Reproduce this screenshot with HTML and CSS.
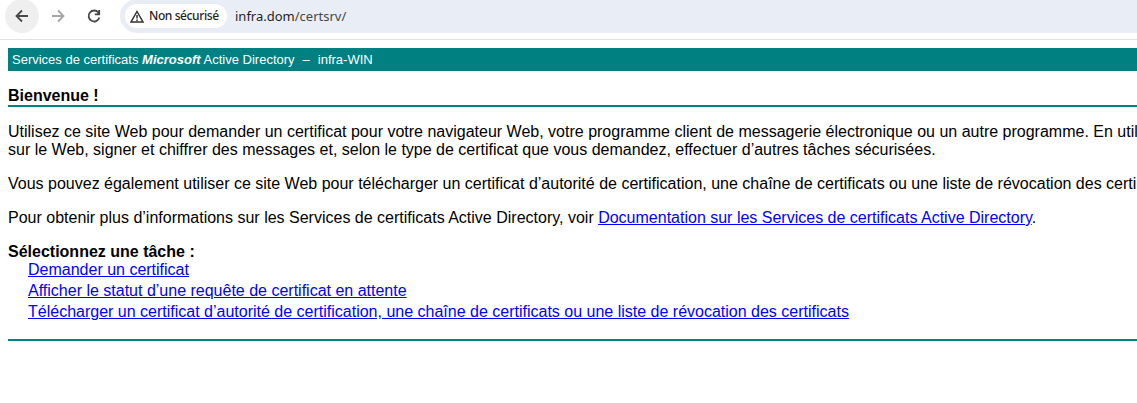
FILE: index.html
```html
<!DOCTYPE html>
<html lang="fr">
<head>
<meta charset="utf-8">
<title>Services de certificats Microsoft Active Directory</title>
<link rel="stylesheet" href="styles.css">
</head>
<body>
<header class="toolbar">
  <button class="nav-button back" aria-label="Retour">
    <svg width="16" height="16" viewBox="0 0 16 16"><path d="M14 8H3M8 2.5L2.5 8L8 13.5"/></svg>
  </button>
  <button class="nav-button forward" aria-label="Avancer">
    <svg width="16" height="16" viewBox="0 0 16 16"><path d="M2 8H13M8 2.5L13.5 8L8 13.5"/></svg>
  </button>
  <button class="nav-button reload" aria-label="Actualiser">
    <svg width="16" height="16" viewBox="0 0 16 16"><path d="M12.4 4.5A5.5 5.5 0 1 0 13.4 9.6M13.2 2V6.3H8.8"/><path class="solid" d="M13.6 3.2V6.8H10Z"/></svg>
  </button>
  <div class="omnibox">
    <span class="security">
      <svg width="14" height="13" viewBox="0 0 14 13"><path d="M7 1.5L13 12H1Z"/><path d="M7 5V8.5M7 9.5V11"/></svg>
      <span class="security-label">Non sécurisé</span>
    </span>
    <span class="url"><span class="host">infra.dom</span>/certsrv/</span>
  </div>
</header>
<main class="page">
  <div class="banner">Services de certificats <b><i>Microsoft</i></b><span class="product">Active Directory</span><span class="dash">–</span><span>infra-WIN</span></div>
  <h1 class="title">Bienvenue !</h1>
  <p class="para">Utilisez ce site Web pour demander un certificat pour votre navigateur Web, votre programme client de messagerie électronique ou un autre programme. En util<br>sur le Web, signer et chiffrer des messages et, selon le type de certificat que vous demandez, effectuer d’autres tâches sécurisées.</p>
  <p class="para">Vous pouvez également utiliser ce site Web pour télécharger un certificat d’autorité de certification, une chaîne de certificats ou une liste de révocation des certi</p>
  <p class="para">Pour obtenir plus d’informations sur les Services de certificats Active Directory, voir <a href="#">Documentation sur les Services de certificats Active Directory</a>.</p>
  <h2 class="tasks-title">Sélectionnez une tâche :</h2>
  <ul class="tasks">
    <li><a href="#">Demander un certificat</a></li>
    <li><a href="#">Afficher le statut d’une requête de certificat en attente</a></li>
    <li><a href="#">Télécharger un certificat d’autorité de certification, une chaîne de certificats ou une liste de révocation des certificats</a></li>
  </ul>
  <div class="rule"></div>
</main>
</body>
</html>
```
FILE: styles.css
```css
* { box-sizing: border-box; }
body {
  margin: 0;
  height: 403px;
  overflow: hidden;
  background: #fff;
  color: #000;
  font: 16px/18px "Liberation Sans", Arial, sans-serif;
}
.toolbar {
  display: flex;
  height: 40px;
  padding-left: 5px;
  border-bottom: 1px solid #dfe1e2;
}
.nav-button {
  display: grid;
  place-items: center;
  width: 34px;
  height: 34px;
  margin: -1px 2px 0 0;
  padding: 0;
  border: 0;
  border-radius: 50%;
  background: none;
}
.back { background: #efefef; }
.nav-button path { fill: none; stroke: #474747; stroke-width: 1.8; }
.forward path { stroke: #a5a5a5; }
.nav-button .solid { fill: #474747; stroke: none; }
.omnibox {
  display: flex;
  flex: 1;
  align-items: center;
  height: 34px;
  margin: -1px -20px 0 7px;
  padding-left: 5px;
  border-radius: 17px;
  background: #e9eef6;
  font: 13px/18px "Noto Sans", sans-serif;
}
.security {
  display: flex;
  align-items: center;
  gap: 5px;
  width: 102px;
  height: 24px;
  padding-left: 5px;
  border-radius: 12px;
  background: #fff;
  white-space: nowrap;
}
.security path { fill: none; stroke: #333; stroke-width: 1.5; }
.security-label { font-size: 12px; font-weight: 500; letter-spacing: -0.4px; color: #1f1f1f; }
.url { margin-left: 8px; color: #474747; font-size: 13px; }
.host { color: #1f1f1f; }
.page { padding: 8px 0 0 8px; }
.banner {
  height: 23px;
  padding-left: 4px;
  background: #008080;
  color: #fff;
  font-size: 13px;
  line-height: 23px;
  white-space: nowrap;
}
.product { margin-left: 3px; }
.dash { margin: 0 8px; }
.title {
  height: 21px;
  margin: 15px 0 0;
  border-bottom: 2px solid #008080;
  font-size: 16px;
  line-height: 19px;
}
.para { margin: 16px 0 0; white-space: nowrap; }
.tasks-title { margin: 16px 0 0; font-size: 16px; line-height: 18px; }
.tasks {
  display: flex;
  flex-direction: column;
  gap: 3px;
  margin: 0;
  padding: 0 0 0 20px;
  list-style: none;
}
a { color: #0000ff; }
.rule { height: 2px; margin-top: 18px; background: #008080; }
```
